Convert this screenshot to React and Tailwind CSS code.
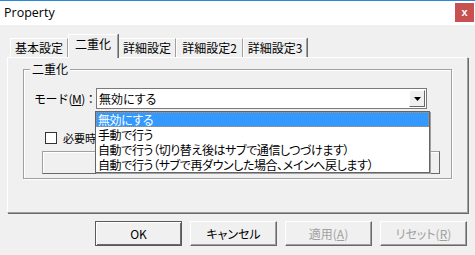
const tabs = [
  { label: '基本設定', w: 'w-[58px]' },
  { label: '二重化', w: 'w-[50px]', active: true },
  { label: '詳細設定', w: 'w-[58px]' },
  { label: '詳細設定2', w: 'w-[67px]' },
  { label: '詳細設定3', w: 'w-[64px]' },
]

const options = [
  '無効にする',
  '手動で行う',
  '自動で行う（切り替え後はサブで通信しつづけます）',
  '自動で行う（サブで再ダウンした場合、メインへ戻します）',
]

function Tab({ label, w, active }) {
  if (active) {
    return (
      <div className={`${w} h-[24px] -mb-px relative z-10 bg-[#f0f0f0] border-t border-l border-white border-r border-r-[#a0a0a0] shadow-[1px_0_0_#696969] flex items-start justify-center pt-[3px]`}>
        {label}
      </div>
    )
  }
  return (
    <div className={`${w} h-[19px] bg-[#f0f0f0] border-t border-l border-white border-r border-r-[#a0a0a0] shadow-[1px_0_0_#696969] flex items-center justify-center`}>
      {label}
    </div>
  )
}

function Button({ children, primary, disabled }) {
  if (primary) {
    return (
      <div className="w-[87px] h-[25px] flex items-center justify-center border border-[#5a5a5a] shadow-[inset_1px_1px_0_#ffffff,inset_-1px_-1px_0_#696969] bg-[#f0f0f0] text-black">
        {children}
      </div>
    )
  }
  return (
    <div className={`w-[87px] h-[25px] flex items-center justify-center border border-t-white border-l-white border-r-[#696969] border-b-[#696969] shadow-[inset_-1px_-1px_0_#a0a0a0] bg-[#f0f0f0] ${disabled ? 'text-[#a0a0a0]' : 'text-black'}`}>
      {children}
    </div>
  )
}

export default function App() {
  return (
    <div className="w-[475px] h-[255px] bg-[#f0f0f0] overflow-hidden text-[12px] leading-none text-black font-['Noto_Sans_CJK_JP','Noto_Sans',sans-serif] [font-feature-settings:'palt']">
      {/* title bar */}
      <div className="h-[25px] bg-white border-t border-[#2b88d8] flex items-start justify-between">
        <span className="mt-[6px] ml-[4px] text-[12.5px] font-['Open_Sans',sans-serif]">Property</span>
        <div className="mt-[2px] mr-px w-[19px] h-[19px] bg-[#c75050] flex items-center justify-center text-white text-[11px] font-bold font-['Liberation_Sans',sans-serif]">
          x
        </div>
      </div>

      <div className="pt-[9px] px-[7px]">
        {/* tab strip */}
        <div className="flex items-end pl-[3px] h-[23px]">
          {tabs.map((t) => (
            <Tab key={t.label} {...t} />
          ))}
        </div>

        {/* tab panel */}
        <div className="relative h-[156px] w-[461px] border-t border-l border-white border-r border-b border-r-[#a0a0a0] border-b-[#a0a0a0] shadow-[1px_1px_0_#696969] pt-[11px] pl-[15px]">
          {/* group box */}
          <div className="relative w-[429px] h-[110px] border border-[#a0a0a0] shadow-[inset_1px_1px_0_#ffffff,1px_1px_0_#ffffff]">
            <span className="absolute left-[6px] -top-[7px] px-[2px] bg-[#f0f0f0]">二重化</span>

            <div className="flex items-center mt-[18px] ml-[10px]">
              <span className="w-[62px] [font-feature-settings:normal] tracking-[-0.5px] whitespace-nowrap">
                モード(<span className="underline">M</span>)：
              </span>
              <div className="w-[331px] h-[21px] bg-white border border-[#7a7a7a] flex items-center justify-between pl-[2px]">
                <span>無効にする</span>
                <div className="w-[16px] h-[17px] mr-px bg-[#f0f0f0] border border-t-white border-l-white border-r-[#696969] border-b-[#696969] flex items-center justify-center">
                  <svg width="7" height="4" viewBox="0 0 7 4">
                    <path d="M0 0h7L3.5 4z" fill="#000" />
                  </svg>
                </div>
              </div>
            </div>

            <div className="flex items-center mt-[23px] ml-[21px] gap-[6px]">
              <div className="w-[12px] h-[12px] bg-white border border-[#333]" />
              <span className="text-[11px] whitespace-nowrap">必要時</span>
            </div>

            <div className="mt-[7px] ml-[18px] w-[398px] h-[23px] border border-t-[#a0a0a0] border-l-[#a0a0a0] border-r-[#696969] border-b-[#696969] shadow-[inset_1px_1px_0_#ffffff]" />
          </div>

          {/* open dropdown list */}
          <div className="absolute left-[87px] top-[53px] w-[335px] h-[62px] bg-white border border-[#646464] shadow-[1px_1px_0_#a0a0a0] z-20">
            {options.map((o, i) => (
              <div
                key={o}
                className={`h-[15px] whitespace-nowrap tracking-[-0.4px] ${
                  i === 0
                    ? 'bg-[#3399ff] text-white border border-dotted border-[#c89050] pl-px leading-[13px]'
                    : 'pl-[2px] leading-[15px]'
                }`}
              >
                {o}
              </div>
            ))}
          </div>
        </div>

        {/* buttons */}
        <div className="flex justify-end gap-[8px] mt-[8px] pr-px">
          <Button primary>OK</Button>
          <Button>キャンセル</Button>
          <Button disabled>
            適用(<span className="underline">A</span>)
          </Button>
          <Button disabled>
            リセット(<span className="underline">R</span>)
          </Button>
        </div>
      </div>
    </div>
  )
}
